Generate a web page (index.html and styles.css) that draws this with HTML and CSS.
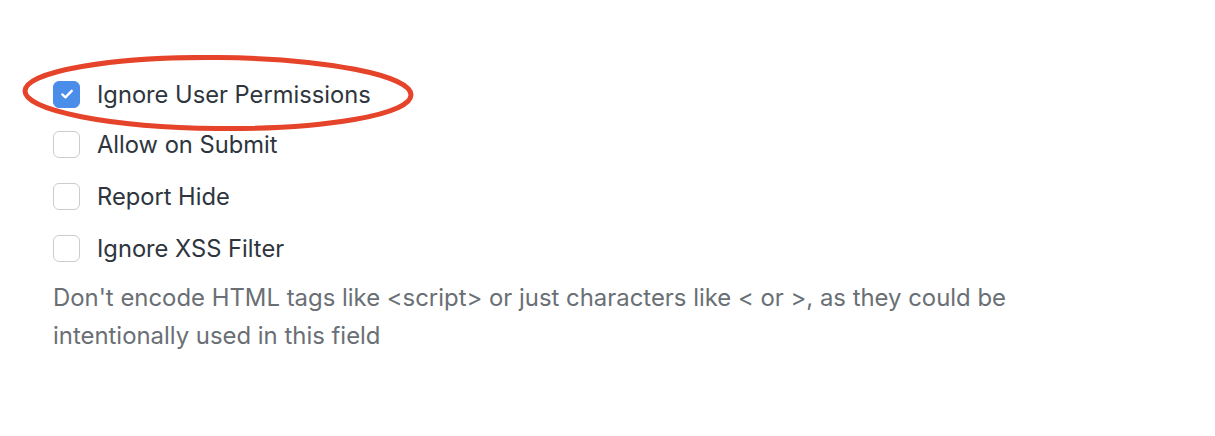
FILE: index.html
```html
<!DOCTYPE html>
<html>
<head>
<meta charset="utf-8">
<link rel="stylesheet" href="styles.css">
</head>
<body>
<div class="panel">
  <div class="check-row highlighted">
    <span class="box checked">
      <svg viewBox="0 0 16 16" width="18" height="18"><path d="M3.8 8.4 L6.6 11 L12.2 5.2" fill="none" stroke="#fff" stroke-width="2.1" stroke-linecap="round" stroke-linejoin="round"/></svg>
    </span>
    <span class="label">Ignore User Permissions</span>
    <svg class="ring" viewBox="0 0 400 80" width="400" height="80"><ellipse cx="198" cy="38" rx="193" ry="35.5" fill="none" stroke="#e5432a" stroke-width="5" transform="rotate(0.6 198 38)"/></svg>
  </div>
  <div class="check-row">
    <span class="box"></span>
    <span class="label">Allow on Submit</span>
  </div>
  <div class="check-row">
    <span class="box"></span>
    <span class="label">Report Hide</span>
  </div>
  <div class="check-row">
    <span class="box"></span>
    <span class="label">Ignore XSS Filter</span>
  </div>
  <p class="desc">Don't encode HTML tags like &lt;script&gt; or just characters like &lt; or &gt;, as they could be intentionally used in this field</p>
</div>
</body>
</html>
```

FILE: styles.css
```css
html, body {
  margin: 0;
  padding: 0;
  background: #fff;
}
body {
  font-family: Inter, "Noto Sans", sans-serif;
}
.panel {
  padding: 70px 0 0 53px;
  width: 1000px;
}
.check-row {
  position: relative;
  display: flex;
  align-items: center;
  gap: 17px;
  height: 52px;
}
.check-row.highlighted {
  height: 48px;
}
.box {
  width: 27px;
  height: 27px;
  box-sizing: border-box;
  border: 1.5px solid #c9ccd0;
  border-radius: 6px;
  display: flex;
  align-items: center;
  justify-content: center;
  background: #fff;
}
.box.checked {
  background: #4a8eea;
  border-color: #4a8eea;
}
.label {
  font-size: 23.7px;
  color: #2e353d;
}
.ring {
  position: absolute;
  left: -33px;
  top: -15px;
  pointer-events: none;
}
.desc {
  margin: 5px 0 0;
  font-size: 23.9px;
  line-height: 38px;
  color: #6a6f75;
}
```
